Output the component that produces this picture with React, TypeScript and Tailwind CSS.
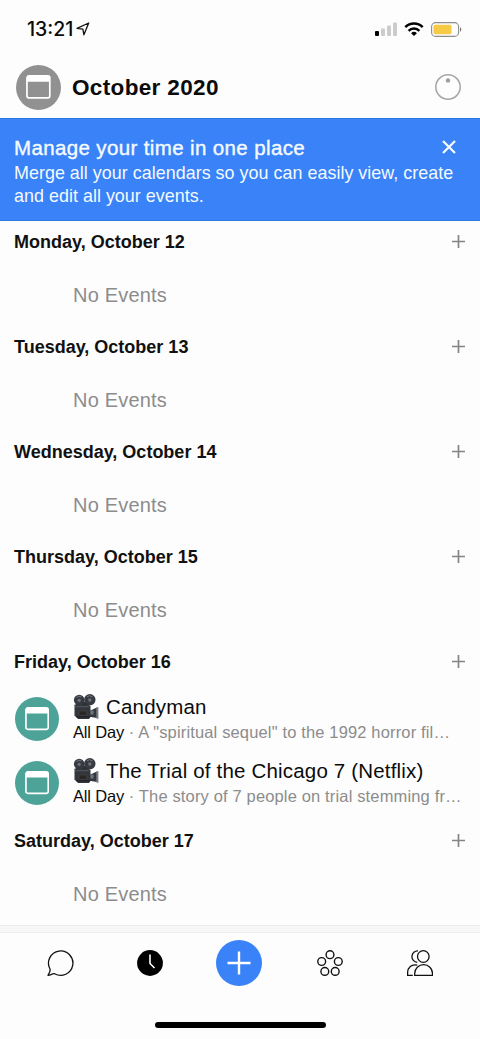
import clsx from "clsx";

type CalendarEvent = {
  title: string;
  time: string;
  description: string;
};

type Day = {
  label: string;
  events: CalendarEvent[];
};

const DAYS: Day[] = [
  { label: "Monday, October 12", events: [] },
  { label: "Tuesday, October 13", events: [] },
  { label: "Wednesday, October 14", events: [] },
  { label: "Thursday, October 15", events: [] },
  {
    label: "Friday, October 16",
    events: [
      {
        title: "Candyman",
        time: "All Day",
        description: 'A "spiritual sequel" to the 1992 horror fil…',
      },
      {
        title: "The Trial of the Chicago 7 (Netflix)",
        time: "All Day",
        description: "The story of 7 people on trial stemming fr…",
      },
    ],
  },
  { label: "Saturday, October 17", events: [] },
];

function CalendarBadge({ className }: { className: string }) {
  return (
    <span
      className={clsx(
        "flex shrink-0 items-center justify-center rounded-full",
        className,
      )}
    >
      <svg viewBox="0 0 26 25" className="h-auto w-[55%]" fill="none">
        <rect x="1" y="1" width="24" height="23" rx="2" stroke="#fff" strokeWidth="1.800" />
        <path d="M1 3a2 2 0 0 1 2-2h20a2 2 0 0 1 2 2v4H1z" fill="#fff" />
      </svg>
    </span>
  );
}

function MovieCamera() {
  return (
    <svg viewBox="0 0 26 26" className="h-[26px] w-[26px] shrink-0">
      <path d="M15 17.500 24 13.500v10.500l-9-1.500z" fill="#34383e" />
      <path d="M23.300 13.500 25.400 13v12l-2.100-.8z" fill="#777d84" />
      <rect x="16.500" y="16.500" width="4" height="4" fill="#737980" />
      <path d="M3 8h13v4H3z" fill="#2c3036" />
      <path d="M1.500 10.500h14l2 2v10.500l-1.500 2H5L1.500 21.500z" fill="#33373d" />
      <path d="M2 12.200h13.500v1H2z" fill="#555a61" />
      <rect x="6" y="17" width="7.500" height="4.500" rx="1" fill="#292625" stroke="#514c4a" strokeWidth=".5" />
      <path d="M2.500 22h14v1.500H4.500z" fill="#1f2226" />
      <circle cx="6.200" cy="6" r="5.300" fill="#373b41" />
      <circle cx="16.800" cy="5.800" r="5.700" fill="#373b41" />
      <path d="M3.500 3.500a4 4 0 0 1 5-.6M14 2.700a4.300 4.300 0 0 1 5.500.3" fill="none" stroke="#777d84" strokeWidth=".9" />
      <circle cx="6.200" cy="6.300" r="1.600" fill="#70757c" />
      <circle cx="16.800" cy="6" r="1.700" fill="#70757c" />
    </svg>
  );
}

function StatusBar() {
  return (
    <div className="flex h-[58px] items-center justify-between pl-[27px] pr-[18px]">
      <div className="flex items-center gap-[3px]">
        <span className="pt-0.5 font-['Inter',sans-serif] text-[19.500px] font-medium">
          13:21
        </span>
        <svg viewBox="0 0 14 14" className="h-3.5 w-3.5" fill="none">
          <path
            d="M12.700 1 1 6.300l5.900.8 1 5.700z"
            stroke="#111"
            strokeWidth="1.300"
            strokeLinejoin="round"
          />
        </svg>
      </div>
      <div className="flex items-center gap-[7px]">
        <svg viewBox="0 0 22 14" className="h-3.5 w-[22px]">
          <rect x="0" y="9" width="4" height="5" rx="1" fill="#000" />
          <rect x="6" y="6.500" width="4" height="7.500" rx="1" fill="#ccc" />
          <rect x="12" y="3.500" width="4" height="10.500" rx="1" fill="#ccc" />
          <rect x="18" y="0.500" width="4" height="13.500" rx="1" fill="#ccc" />
        </svg>
        <svg viewBox="0 0 20 14" className="h-3.5 w-5" fill="none" stroke="#000">
          <path d="M1.300 5.200a12.300 12.300 0 0 1 17.400 0" strokeWidth="2.500" />
          <path d="M4.600 8.800a7.600 7.600 0 0 1 10.800 0" strokeWidth="2.400" />
          <path d="M10 14 7.100 11.200a4.100 4.100 0 0 1 5.800 0z" fill="#000" stroke="none" />
        </svg>
        <svg viewBox="0 0 31 15" className="h-[15px] w-[31px]">
          <rect x=".6" y=".6" width="27" height="13.800" rx="4" fill="none" stroke="#8d8d8d" strokeWidth="1.100" />
          <rect x="2.500" y="2.700" width="18" height="9.600" rx="1.800" fill="#f7ca45" />
          <path d="M29 5q2.600 2.500 0 5z" fill="#777" />
        </svg>
      </div>
    </div>
  );
}

function Header() {
  return (
    <header className="flex h-[60px] items-center pb-0.5 pl-4 pr-[18px]">
      <CalendarBadge className="h-[45px] w-[45px] bg-[#919191]" />
      <h1 className="ml-[11px] grow pt-0.5 text-[22.500px] font-bold tracking-[0.350px]">
        October 2020
      </h1>
      <svg viewBox="0 0 28 28" className="h-7 w-7" fill="none">
        <circle cx="14" cy="14" r="12.200" stroke="#a5a5a5" strokeWidth="1.500" />
        <circle cx="14" cy="7.500" r="2.200" fill="#a0a0a0" />
      </svg>
    </header>
  );
}

function Banner() {
  return (
    <section className="h-[103px] border-y border-[#2f78dd] bg-[#3982f7] pl-3.5 pr-3 pt-4 text-[#f4faff]">
      <div className="flex h-[27px] items-center justify-between">
        <h2 className="text-[20.500px] tracking-[0.370px] [-webkit-text-stroke:0.4px_currentColor]">
          Manage your time in one place
        </h2>
        <svg viewBox="0 0 14 14" className="mb-1 mr-3 h-3.5 w-3.5" stroke="currentColor" strokeWidth="2.300">
          <path d="m1 1 12 12M13 1 1 13" />
        </svg>
      </div>
      <p className="whitespace-nowrap text-[17.900px] leading-[23px] tracking-[0.030px]">
        Merge all your calendars so you can easily view, create
        <br />
        and edit all your events.
      </p>
    </section>
  );
}

function EventRow({ event }: { event: CalendarEvent }) {
  return (
    <li className="flex h-16 items-center pl-[15px]">
      <CalendarBadge className="h-11 w-11 bg-[#4ea398]" />
      <div className="ml-3.5 whitespace-nowrap">
        <div className="flex h-[26px] items-center gap-[7px]">
          <MovieCamera />
          <span className="text-[20.500px] tracking-[0.180px]">{event.title}</span>
        </div>
        <p className="text-[16.500px] leading-[24px]">
          <span className="tracking-[-0.180px]">{event.time}</span>
          <span className="tracking-[0.150px] text-[#8c8c8c]"> · {event.description}</span>
        </p>
      </div>
    </li>
  );
}

function DaySection({ day }: { day: Day }) {
  return (
    <section>
      <div className="flex h-[42px] items-center justify-between pl-3.5 pr-[15px]">
        <h3 className="pt-px text-[18px] font-bold text-[#111]">{day.label}</h3>
        <svg viewBox="0 0 13 13" className="mb-px h-[13px] w-[13px]" stroke="#858585" strokeWidth="1.700">
          <path d="M6.500 0v13M0 6.500h13" />
        </svg>
      </div>
      {day.events.length > 0 ? (
        <ul className="pb-[5px] pt-1">
          {day.events.map((event) => (
            <EventRow key={event.title} event={event} />
          ))}
        </ul>
      ) : (
        <p className="flex h-[63px] items-center pl-[73px] text-[20px] tracking-[0.200px] text-[#8c8c8c]">
          No Events
        </p>
      )}
    </section>
  );
}

function TabBar() {
  return (
    <nav className="mt-auto h-[114px] border-t border-[#ececec] bg-[#f7f7f7] pt-1.5">
      <div className="flex h-full flex-col border-t border-[#eeeeee] bg-[#fdfdfd]">
        <div className="grid h-[60px] grid-cols-[90px_90px_90px_90px_90px] place-items-center justify-center">
          <svg viewBox="0 0 28 28" className="h-7 w-7" fill="none" stroke="#111" strokeWidth="1.300">
            <path
              d="M3.900 19.800A12.200 12.200 0 1 1 8.600 24.700C6.700 24.200 4.900 26.100 2 26.300 2.500 24.800 4.900 22.800 3.900 19.800z"
              strokeLinejoin="round"
            />
          </svg>
          <svg viewBox="0 0 26 26" className="h-[26px] w-[26px]" fill="none">
            <circle cx="13" cy="13" r="12.900" fill="#000" />
            <path d="M13 4.500V13.500L17.500 18" stroke="#fff" strokeWidth="1.600" />
          </svg>
          <button className="mr-0.5 flex h-[46px] w-[46px] items-center justify-center rounded-full bg-[#3982f7]">
            <svg viewBox="0 0 24 24" className="h-6 w-6" stroke="#fff" strokeWidth="2.400">
              <path d="M12 .5v23M.5 12h23" />
            </svg>
          </button>
          <svg viewBox="0 0 26 26" className="h-[26px] w-[26px]" fill="none" stroke="#111" strokeWidth="1.400">
            <circle cx="13" cy="4.700" r="3.900" />
            <circle cx="4.700" cy="11.500" r="3.900" />
            <circle cx="21.300" cy="11.500" r="3.900" />
            <circle cx="7.800" cy="21.400" r="3.900" />
            <circle cx="18.200" cy="21.400" r="3.900" />
          </svg>
          <svg viewBox="0 0 26 26" className="h-[26px] w-[26px]" fill="none" stroke="#111" strokeWidth="1.300">
            <circle cx="16.300" cy="6.500" r="5.800" />
            <path d="M7.700 25.300V23.500a8.900 8.900 0 0 1 17.800 0v1.800z" />
            <path d="M11 .9A5.700 5.700 0 1 0 10.300 12.300M10.300 15.200C4.500 13.600.6 17.800.6 23v2.300h5.200" />
          </svg>
        </div>
        <div className="mx-auto mt-[29px] h-1.5 w-[171px] rounded-full bg-black" />
      </div>
    </nav>
  );
}

export default function App() {
  return (
    <main className="flex h-[1039px] w-[480px] flex-col overflow-hidden bg-[#fdfdfd] font-['Liberation_Sans',Arial,sans-serif] text-[#0b0b0b]">
      <StatusBar />
      <Header />
      <Banner />
      {DAYS.map((day) => (
        <DaySection key={day.label} day={day} />
      ))}
      <TabBar />
    </main>
  );
}
